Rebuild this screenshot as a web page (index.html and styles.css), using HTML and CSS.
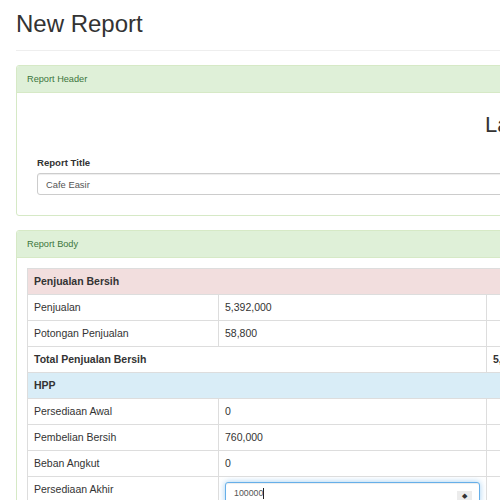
FILE: index.html
```html
<!DOCTYPE html>
<html lang="id">
<head>
<meta charset="utf-8">
<title>New Report</title>
<link rel="stylesheet" href="styles.css">
</head>
<body>
<div class="page">
  <div class="page-header"><h1>New Report</h1></div>

  <div class="panel">
    <div class="panel-heading">Report Header</div>
    <div class="panel-body">
      <h2 class="report-name">Laporan Laba Rugi</h2>
      <div class="form-group">
        <label class="field-label" for="title">Report Title</label>
        <input class="text-input" id="title" type="text" value="Cafe Easir">
      </div>
    </div>
  </div>

  <div class="panel">
    <div class="panel-heading">Report Body</div>
    <div class="panel-body">
      <table class="report-table">
        <colgroup><col class="c1"><col class="c2"><col></colgroup>
        <tr class="row-danger"><th colspan="3">Penjualan Bersih</th></tr>
        <tr><td>Penjualan</td><td>5,392,000</td><td></td></tr>
        <tr><td>Potongan Penjualan</td><td>58,800</td><td></td></tr>
        <tr><th colspan="2">Total Penjualan Bersih</th><th>5,333,200</th></tr>
        <tr class="row-info"><th colspan="3">HPP</th></tr>
        <tr><td>Persediaan Awal</td><td>0</td><td></td></tr>
        <tr><td>Pembelian Bersih</td><td>760,000</td><td></td></tr>
        <tr><td>Beban Angkut</td><td>0</td><td></td></tr>
        <tr><td>Persediaan Akhir</td><td class="input-cell"><div class="num-input"><span class="num-value">100000</span><span class="caret"></span><span class="spin">&#9670;</span></div></td><td></td></tr>
      </table>
    </div>
  </div>
</div>
</body>
</html>
```
FILE: styles.css
```css
html, body {
  margin: 0;
  padding: 0;
  overflow: hidden;
  background: #fff;
}
body {
  font-family: "Liberation Sans", Arial, sans-serif;
  color: #333;
}
.page {
  width: 1125px;
  padding: 0 16px;
}
.page-header {
  padding: 11px 0 13px;
  border-bottom: 1px solid #eee;
  margin-bottom: 14px;
}
h1 {
  margin: 0;
  font-size: 24px;
  line-height: 26px;
  font-weight: 400;
}
.panel {
  border: 1px solid #d6e9c6;
  border-radius: 3px;
  margin-bottom: 14px;
}
.panel-heading {
  background: #dff0d8;
  color: #3c763d;
  border-bottom: 1px solid #d6e9c6;
  border-radius: 2px 2px 0 0;
  padding: 7px 10px 6px;
  font-size: 9.2px;
  line-height: 13px;
}
.panel-body {
  padding: 10px;
}
.report-name {
  margin: 10px 0 19px;
  font-size: 22px;
  line-height: 24px;
  font-weight: 400;
  text-align: center;
}
.form-group {
  margin-bottom: 10px;
  padding: 0 10px;
}
.field-label {
  display: block;
  font-weight: 700;
  font-size: 9.6px;
  line-height: 13px;
  margin-bottom: 4px;
}
.text-input {
  display: block;
  box-sizing: border-box;
  width: 100%;
  height: 22px;
  margin: 0;
  border: 1px solid #ccc;
  border-radius: 3px;
  padding: 0 8px;
  font-family: "Liberation Sans", Arial, sans-serif;
  font-size: 9.4px;
  color: #555;
  background: #fff;
  box-shadow: inset 0 1px 1px rgba(0, 0, 0, .075);
  outline: none;
}
.report-table {
  width: 100%;
  border-collapse: collapse;
  table-layout: fixed;
  border: 1px solid #ddd;
  font-size: 10.5px;
  line-height: 13px;
}
.report-table .c1 { width: 191px; }
.report-table .c2 { width: 268px; }
.report-table td,
.report-table th {
  border: 1px solid #ddd;
  padding: 6px;
  text-align: left;
  vertical-align: top;
  white-space: nowrap;
  overflow: hidden;
}
.report-table th {
  font-weight: 700;
}
.row-danger th {
  background: #f2dede;
}
.row-info th {
  background: #d9edf7;
}
.report-table td.input-cell {
  padding-top: 5px;
}
.num-input {
  box-sizing: border-box;
  height: 22px;
  display: flex;
  align-items: center;
  border: 1px solid #66afe9;
  border-radius: 3px;
  padding: 0 7px 0 8px;
  box-shadow: inset 0 1px 1px rgba(0, 0, 0, .075), 0 0 6px rgba(102, 175, 233, .6);
  background: #fff;
}
.num-value {
  font-size: 8.8px;
  color: #555;
}
.caret {
  width: 1px;
  height: 11px;
  background: #222;
}
.spin {
  margin-left: auto;
  width: 15px;
  height: 10px;
  margin-top: 6px;
  background: #ececec;
  color: #333;
  font-size: 7px;
  line-height: 10px;
  text-align: center;
}
```
